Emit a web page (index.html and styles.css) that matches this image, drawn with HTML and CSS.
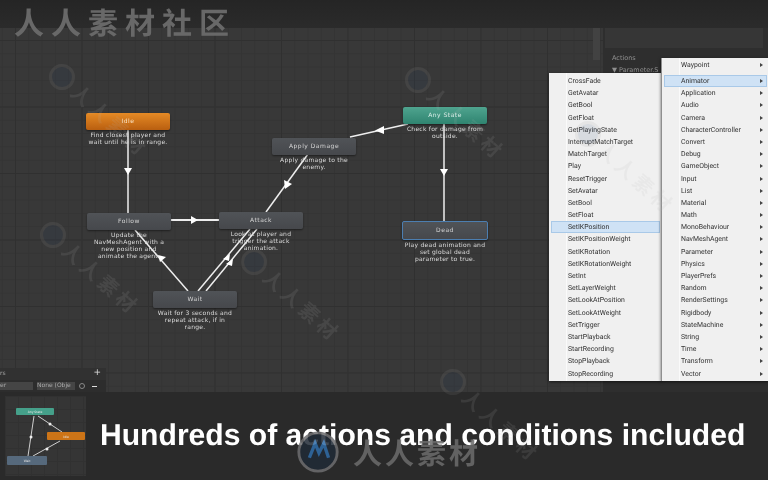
FILE: index.html
```html
<!DOCTYPE html>
<html lang="en">
<head>
    <meta charset="UTF-8">
    <meta name="viewport" content="width=device-width, initial-scale=1.0">
    <title>Hundreds of actions and conditions included</title>
    <link rel="stylesheet" href="styles.css">
</head>
<body>
    <div class="page">
        <div class="top-band">
            <span class="site-mark">人人素材社区</span>
        </div>

        <div class="graph">
            <!-- transitions -->
            <svg class="wires" width="768" height="364" viewBox="0 28 768 364">
                <g stroke="#eeeeee" stroke-width="1.500" fill="none">
                    <path d="M128 130V213"/>
                    <path d="M170 220H219" stroke-width="1.800"/>
                    <path d="M308 154L266 212"/>
                    <path d="M408 124L350 137"/>
                    <path d="M444 123V221"/>
                    <path d="M188 291L135 230"/>
                    <path d="M198 291L250 229"/>
                    <path d="M206 291L257 229"/>
                </g>
                <g fill="#fff">
                    <path d="M124 168H132L128 175Z"/>
                    <path d="M191 216V224L198 220Z"/>
                    <path d="M284 180L292 184L285 189Z"/>
                    <path d="M375 130.500L384 126L384 134Z"/>
                    <path d="M440 169H448L444 176Z"/>
                    <path d="M158 255L166 257L160 262Z"/>
                    <path d="M230 254L229 261L223 259Z"/>
                    <path d="M233 259L232 266L226 264Z"/>
                </g>
            </svg>

            <div class="state state-idle">
                <div class="state-box">Idle</div>
                <p>Find closest player and<br>wait until he is in range.</p>
            </div>
            <div class="state state-damage">
                <div class="state-box">Apply Damage</div>
                <p>Apply damage to the<br>enemy.</p>
            </div>
            <div class="state state-any">
                <div class="state-box">Any State</div>
                <p>Check for damage from<br>outside.</p>
            </div>
            <div class="state state-dead">
                <div class="state-box">Dead</div>
                <p>Play dead animation and<br>set global dead<br>parameter to true.</p>
            </div>
            <div class="state state-follow">
                <div class="state-box">Follow</div>
                <p>Update the<br>NavMeshAgent with a<br>new position and<br>animate the agent.</p>
            </div>
            <div class="state state-attack">
                <div class="state-box">Attack</div>
                <p>Look at player and<br>trigger the attack<br>animation.</p>
            </div>
            <div class="state state-wait">
                <div class="state-box">Wait</div>
                <p>Wait for 3 seconds and<br>repeat attack, if in<br>range.</p>
            </div>

            <!-- inspector behind the menus -->
            <div class="scroll-thumb"></div>
            <div class="inspector">
                <div class="inspector-well"></div>
                <div class="inspector-label">Actions</div>
                <div class="inspector-label">▼ Parameter.S</div>
            </div>

            <!-- parameters panel, bottom left -->
            <div class="params">
                <div class="params-head"><span>rs</span><span class="params-add">+</span></div>
                <div class="params-row">
                    <span class="params-field params-name">er</span>
                    <span class="params-field params-none">None (Obje</span>
                    <span class="params-dot"></span>
                    <span class="params-minus"></span>
                </div>
            </div>

            <ul class="menu menu-actions">
                <li>CrossFade</li>
                <li>GetAvatar</li>
                <li>GetBool</li>
                <li>GetFloat</li>
                <li>GetPlayingState</li>
                <li>InterruptMatchTarget</li>
                <li>MatchTarget</li>
                <li>Play</li>
                <li>ResetTrigger</li>
                <li>SetAvatar</li>
                <li>SetBool</li>
                <li>SetFloat</li>
                <li class="active">SetIKPosition</li>
                <li>SetIKPositionWeight</li>
                <li>SetIKRotation</li>
                <li>SetIKRotationWeight</li>
                <li>SetInt</li>
                <li>SetLayerWeight</li>
                <li>SetLookAtPosition</li>
                <li>SetLookAtWeight</li>
                <li>SetTrigger</li>
                <li>StartPlayback</li>
                <li>StartRecording</li>
                <li>StopPlayback</li>
                <li>StopRecording</li>
            </ul>
            <ul class="menu menu-groups">
                <li class="first">Waypoint</li>
                <li class="active">Animator</li>
                <li>Application</li>
                <li>Audio</li>
                <li>Camera</li>
                <li>CharacterController</li>
                <li>Convert</li>
                <li>Debug</li>
                <li>GameObject</li>
                <li>Input</li>
                <li>List</li>
                <li>Material</li>
                <li>Math</li>
                <li>MonoBehaviour</li>
                <li>NavMeshAgent</li>
                <li>Parameter</li>
                <li>Physics</li>
                <li>PlayerPrefs</li>
                <li>Random</li>
                <li>RenderSettings</li>
                <li>Rigidbody</li>
                <li>StateMachine</li>
                <li>String</li>
                <li>Time</li>
                <li>Transform</li>
                <li>Vector</li>
            </ul>
        </div>

        <div class="banner">
            <div class="preview">
                <svg width="81" height="80" viewBox="0 0 81 80">
                    <g stroke="#cfcfcf" stroke-width="1" fill="none">
                        <path d="M29 20L23 60"/>
                        <path d="M33 20L57 36"/>
                        <path d="M55 45L28 60"/>
                    </g>
                    <g fill="#eee">
                        <circle cx="26" cy="41" r="1.500"/>
                        <circle cx="45" cy="28" r="1.500"/>
                        <circle cx="42" cy="53" r="1.500"/>
                    </g>
                    <rect class="mini-any" x="11" y="12" width="38" height="7" rx="1"/>
                    <rect class="mini-idle" x="42" y="36" width="38" height="8" rx="1"/>
                    <rect class="mini-wait" x="2" y="60" width="40" height="9" rx="1"/>
                    <g class="mini-label">
                        <text x="30" y="17">Any State</text>
                        <text x="61" y="41.500">Idle</text>
                        <text x="22" y="66">Wait</text>
                    </g>
                </svg>
            </div>
            <h1>Hundreds of actions and conditions included</h1>
        </div>

        <!-- watermark stamps -->
        <div class="stamp stamp-a"><span class="stamp-ring"></span><span class="stamp-text">人人素材</span></div>
        <div class="stamp stamp-b"><span class="stamp-ring"></span><span class="stamp-text">人人素材</span></div>
        <div class="stamp stamp-c"><span class="stamp-ring"></span><span class="stamp-text">人人素材</span></div>
        <div class="stamp stamp-d"><span class="stamp-ring"></span><span class="stamp-text">人人素材</span></div>
        <div class="stamp stamp-e"><span class="stamp-ring"></span><span class="stamp-text">人人素材</span></div>
        <div class="stamp stamp-f"><span class="stamp-ring"></span><span class="stamp-text">人人素材</span></div>

        <div class="logo-mark">
            <svg width="46" height="46" viewBox="0 0 48 48">
                <circle cx="24" cy="24" r="20" fill="#202a36" stroke="#6e6e70" stroke-width="3"/>
                <path d="M15 30L21 15L25 25L30 15L35 30" fill="none" stroke="#2f6ca8" stroke-width="3.500"/>
            </svg>
            <span>人人素材</span>
        </div>
    </div>
</body>
</html>
```

FILE: styles.css
```css
html, body {
    margin: 0;
    padding: 0;
    background: #2a2a2a;
}
.page {
    position: relative;
    display: flex;
    flex-direction: column;
    width: 768px;
    height: 480px;
    overflow: hidden;
    font-family: "DejaVu Sans", sans-serif;
    text-rendering: geometricPrecision;
    filter: blur(0.35px);
}
.top-band {
    position: relative;
    z-index: 1;
    height: 28px;
    flex: none;
    background: linear-gradient(#252525, #2b2b2b);
}
.site-mark {
    display: block;
    margin-left: 14px;
    font-family: "Noto Sans CJK SC", sans-serif;
    font-size: 30px;
    font-weight: 700;
    line-height: 42px;
    letter-spacing: 7px;
    white-space: nowrap;
    color: #686868;
}
.graph {
    position: relative;
    height: 364px;
    flex: none;
    background-color: #383838;
    background-image:
        linear-gradient(#303030 1px, transparent 1px),
        linear-gradient(90deg, #303030 1px, transparent 1px),
        linear-gradient(#343434 1px, transparent 1px),
        linear-gradient(90deg, #343434 1px, transparent 1px);
    background-size: 66.500px 66.500px, 66.500px 66.500px, 13.300px 13.300px, 13.300px 13.300px;
    background-position: 15px 12px, 15px 12px, 15px 12px, 15px 12px;
}
.wires {
    position: absolute;
    left: 0;
    top: 0;
}

/* state nodes */
.state {
    position: absolute;
    width: 84px;
}
.state-box {
    display: flex;
    align-items: center;
    justify-content: center;
    height: 17px;
    border-radius: 2px;
    background: linear-gradient(#505357, #46484c);
    box-shadow: 0 1px 2px rgba(0, 0, 0, 0.45);
    font-size: 6px;
    letter-spacing: 0.5px;
    color: #d4d4d4;
}
.state p {
    margin: 1.500px -8px 0;
    font-size: 6px;
    line-height: 7.300px;
    letter-spacing: 0.25px;
    text-align: center;
    color: #dcdcdc;
}
.state-idle { left: 86px; top: 85px; }
.state-idle .state-box {
    background: linear-gradient(#e58a25, #b95f10);
    color: #fbe3c4;
}
.state-damage { left: 272px; top: 110px; }
.state-any { left: 403px; top: 79px; }
.state-any .state-box {
    background: linear-gradient(#4fa48f, #2f8470);
    color: #d9efe9;
}
.state-dead { left: 403px; top: 193px; }
.state-dead .state-box {
    border: 1px solid #4c7eb0;
    margin: 0 -1px;
}
.state-follow { left: 87px; top: 185px; }
.state-attack { left: 219px; top: 184px; }
.state-wait { left: 153px; top: 263px; }

/* inspector */
.scroll-thumb {
    position: absolute;
    left: 593px;
    top: 0;
    width: 7px;
    height: 32px;
    background: #424242;
}
.inspector {
    position: absolute;
    left: 603px;
    top: 0;
    width: 165px;
    height: 364px;
    background: #2e2e2e;
}
.inspector-well {
    height: 20px;
    margin: 0 5px 4px 2px;
    background: #363636;
}
.inspector-label {
    margin-left: 9px;
    font-size: 6.500px;
    line-height: 12px;
    color: #8f8f8f;
}

/* parameters */
.params {
    position: absolute;
    left: 0;
    bottom: 0;
    width: 106px;
    height: 24px;
    background: #2d2d2d;
    font-size: 6px;
    color: #a8a8a8;
}
.params-head {
    display: flex;
    justify-content: space-between;
    height: 12px;
    padding-right: 5px;
    line-height: 11px;
    background: #313131;
}
.params-add {
    font-size: 9px;
    color: #ddd;
}
.params-row {
    display: flex;
    align-items: center;
    gap: 4px;
    height: 12px;
}
.params-field {
    height: 8px;
    line-height: 8px;
    background: #454545;
    overflow: hidden;
    white-space: nowrap;
}
.params-name {
    width: 33px;
}
.params-none {
    width: 38px;
}
.params-dot {
    width: 4px;
    height: 4px;
    border: 1px solid #888;
    border-radius: 50%;
}
.params-minus {
    width: 5px;
    height: 1px;
    margin-left: 3px;
    background: #ddd;
}

/* context menus */
.menu {
    position: absolute;
    margin: 0;
    padding: 2px 2px 0;
    list-style: none;
    background: linear-gradient(90deg, #f0f0f0 17px, #fafafa 17px, #fafafa 18px, #f0f0f0 18px);
    box-shadow: 0 1px 3px rgba(0, 0, 0, 0.6);
    font-family: "Roboto", sans-serif;
    font-size: 6.900px;
    color: #333;
}
.menu li {
    box-sizing: border-box;
    height: 12.200px;
    padding-left: 17px;
    line-height: 12.200px;
    white-space: nowrap;
}
.menu .active {
    background: #cfe2f5;
    outline: 1px solid #a9c9e8;
    outline-offset: -1px;
}
.menu-actions {
    left: 549px;
    top: 45px;
    width: 109px;
    height: 306px;
}
.menu-groups {
    left: 661px;
    top: 30px;
    width: 103px;
    height: 322px;
    padding-top: 1px;
    border-left: 1px solid #8f8f8f;
}
.menu-groups li {
    position: relative;
}
.menu-groups .first {
    height: 16px;
    line-height: 12px;
}
.menu-groups li::after {
    content: "";
    position: absolute;
    right: 4px;
    top: 4px;
    border-left: 3px solid #444;
    border-top: 2px solid transparent;
    border-bottom: 2px solid transparent;
}

/* bottom banner */
.banner {
    display: flex;
    flex: 1;
    align-items: center;
    gap: 14px;
    padding-left: 5px;
    background: #2a2a2a;
}
.preview {
    width: 81px;
    height: 80px;
    background: #353535;
    background-image:
        linear-gradient(#313131 1px, transparent 1px),
        linear-gradient(90deg, #313131 1px, transparent 1px);
    background-size: 13px 13px;
}
.mini-any { fill: #45a08a; }
.mini-idle { fill: #cc7417; }
.mini-wait { fill: #56697c; }
.mini-label {
    font-size: 3px;
    text-anchor: middle;
    fill: #e6e6e6;
}
.banner h1 {
    margin: 0;
    font-family: "Liberation Sans", sans-serif;
    font-size: 30.100px;
    font-weight: 700;
    white-space: nowrap;
    color: #fff;
}

/* watermarks */
.stamp {
    position: absolute;
    display: flex;
    align-items: center;
    gap: 4px;
    transform: rotate(42deg);
    transform-origin: 13px 16px;
    opacity: 0.12;
    pointer-events: none;
}
.stamp-ring {
    box-sizing: border-box;
    width: 26px;
    height: 26px;
    border: 3px solid #999;
    border-radius: 50%;
    background: #2d4a72;
}
.stamp-text {
    font-family: "Noto Sans CJK SC", sans-serif;
    font-size: 20px;
    font-weight: 700;
    line-height: 32px;
    letter-spacing: 4px;
    white-space: nowrap;
    color: #b5b5b5;
}
.stamp-a { left: 49px; top: 61px; }
.stamp-b { left: 405px; top: 64px; }
.stamp-c { left: 40px; top: 219px; }
.stamp-d { left: 241px; top: 246px; }
.stamp-e { left: 440px; top: 366px; }
.stamp-f { left: 575px; top: 118px; }
.logo-mark {
    position: absolute;
    left: 295px;
    top: 429px;
    display: flex;
    align-items: center;
    gap: 12px;
    opacity: 0.85;
}
.logo-mark span {
    font-family: "Noto Sans CJK SC", sans-serif;
    font-size: 29px;
    font-weight: 700;
    letter-spacing: 3px;
    color: #6c6c6c;
}
```
